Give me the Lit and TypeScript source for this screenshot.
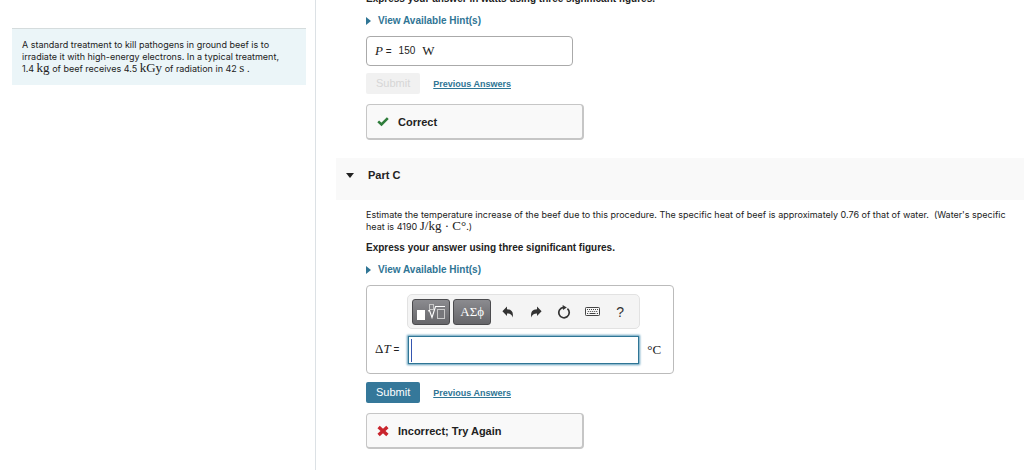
import { LitElement, html, css } from "lit";
import { customElement, property } from "lit/decorators.js";

const check = html`<svg class="mark" viewBox="0 0 12 12" aria-hidden="true">
  <path d="M1.2 5.4 L4.5 8.5 L10.8 2.2" fill="none" stroke="#2f7d3b" stroke-width="2.6" />
</svg>`;

const cross = html`<svg class="mark" viewBox="0 0 12 12" aria-hidden="true">
  <path d="M1.6 2 L10.4 10 M10.4 2 L1.6 10" fill="none" stroke="#c9252d" stroke-width="3.4" />
</svg>`;

const undo = html`<svg viewBox="0 0 12 12" aria-hidden="true">
  <path d="M5 0.5 V3.2 C9.5 3.2 11.8 6 10.6 11.5 C10 8.6 8.3 7.4 5 7.4 V10 L0.4 5.2 Z" />
</svg>`;

const redo = html`<svg viewBox="0 0 12 12" aria-hidden="true">
  <path d="M7 0.5 V3.2 C2.5 3.2 0.2 6 1.4 11.5 C2 8.6 3.7 7.4 7 7.4 V10 L11.6 5.2 Z" />
</svg>`;

const reset = html`<svg class="reset" viewBox="0 0 14 14" aria-hidden="true">
  <path d="M10.4 3.6 A5.2 5.2 0 1 1 6.4 2.4" fill="none" stroke="#333" stroke-width="1.7" />
  <path d="M5.6 0 L9.8 2.4 L6 5 Z" />
</svg>`;

const keyboard = html`<svg class="keyboard" viewBox="0 0 15 9" aria-hidden="true">
  <rect x="0.5" y="0.5" width="14" height="8" rx="0.8" fill="#f8f8f8" stroke="#444" />
  <path d="M2 2.5 H13 M2.8 4.5 H13" stroke="#444" stroke-dasharray="1 1" fill="none" />
  <path d="M2 6.5 H3.2 M4.5 6.5 H10.5 M11.8 6.5 H13" stroke="#444" fill="none" />
</svg>`;

const template = html`<svg class="template" viewBox="0 0 30 18" aria-hidden="true">
  <rect x="1" y="7" width="8" height="10" fill="#fff" />
  <path d="M12 8 L13.5 7.5 L16 14.5 L19.5 3.5 H29" fill="none" stroke="#fff" stroke-width="1.1" />
  <rect x="13.5" y="1.5" width="4" height="5" fill="none" stroke="#c8c8c8" />
  <rect x="21.5" y="6.5" width="7" height="9" fill="#77777b" stroke="#c8c8c8" />
</svg>`;

const shared = css`
  * {
    box-sizing: border-box;
  }
  button {
    font: inherit;
    margin: 0;
    padding: 0;
    border: 0;
    background: none;
    color: inherit;
  }
  .serif {
    font-family: "Liberation Serif", "Times New Roman", serif;
    font-size: 13px;
    line-height: 0;
  }
`;

@customElement("hint-toggle")
export class HintToggle extends LitElement {
  static styles = [
    shared,
    css`
      :host {
        display: block;
      }
      .toggle {
        display: flex;
        align-items: center;
        gap: 7px;
        color: #2f7595;
        font-weight: bold;
        line-height: 12px;
      }
      .toggle::before {
        content: "";
        border: solid transparent;
        border-width: 4px 0 4px 5px;
        border-left-color: #2f7595;
      }
    `,
  ];

  render() {
    return html`<button class="toggle" type="button">View Available Hint(s)</button>`;
  }
}

@customElement("submit-row")
export class SubmitRow extends LitElement {
  @property({ type: Boolean }) disabled = false;

  static styles = [
    shared,
    css`
      :host {
        display: flex;
        align-items: center;
        gap: 13px;
      }
      .submit {
        padding: 4px 10px;
        border-radius: 2px;
        background: #35789a;
        color: #fff;
        font-size: 11px;
        line-height: 13px;
      }
      .submit:disabled {
        background: #f1f1f1;
        color: #d6d6d6;
      }
      .previous {
        color: #2f7595;
        font-size: 9px;
        font-weight: bold;
      }
    `,
  ];

  render() {
    return html`<button class="submit" type="button" ?disabled=${this.disabled}>Submit</button>
      <a class="previous" href="#previous">Previous Answers</a>`;
  }
}

@customElement("result-box")
export class ResultBox extends LitElement {
  @property({ type: Boolean }) correct = false;

  static styles = [
    shared,
    css`
      :host {
        display: flex;
        align-items: center;
        gap: 9px;
        box-sizing: border-box;
        width: 218px;
        max-width: 100%;
        padding: 11px 10px 10px;
        border: 1px solid #c6c6c6;
        border-right-width: 2px;
        border-bottom-width: 2px;
        border-radius: 4px;
        background: #f9f9f9;
        color: #222;
        font-size: 11px;
        font-weight: bold;
        line-height: 12px;
      }
      .mark {
        width: 12px;
        height: 12px;
      }
    `,
  ];

  render() {
    return html`${this.correct ? check : cross}
      <span>${this.correct ? "Correct" : "Incorrect; Try Again"}</span>`;
  }
}

@customElement("answer-editor")
export class AnswerEditor extends LitElement {
  static styles = [
    shared,
    css`
      :host {
        display: grid;
        grid-template-columns: auto 233px auto;
        align-items: center;
        gap: 6px 5px;
        box-sizing: border-box;
        width: fit-content;
        padding: 8px 12px 8px 8px;
        border: 1px solid #bbb;
        border-radius: 4px;
      }
      .toolbar {
        grid-column: 2;
        display: flex;
        align-items: center;
        height: 35px;
        padding: 0 4px;
        border: 1px solid #e2e2e2;
        border-radius: 5px;
        background: #f4f4f4;
      }
      .key {
        display: grid;
        place-items: center;
        width: 38px;
        height: 26px;
        margin-right: 3px;
        border: 1px solid #4b4b4e;
        border-radius: 3px;
        background: linear-gradient(#8b8b8f, #66666a);
        color: #fff;
      }
      .tool {
        display: grid;
        place-items: center;
        width: 28px;
        height: 26px;
        fill: #333;
        color: #333;
        font-size: 14px;
      }
      .tool svg {
        width: 12px;
        height: 12px;
      }
      .tool .reset {
        width: 14px;
        height: 14px;
      }
      .tool .keyboard {
        width: 15px;
        height: 9px;
      }
      .template {
        width: 30px;
        height: 18px;
      }
      .name {
        grid-column: 1;
        padding-right: 3px;
        color: #222;
      }
      .field {
        position: relative;
        display: flex;
        padding: 1px;
      }
      .field::after {
        content: "";
        position: absolute;
        left: 4px;
        top: 4px;
        width: 1px;
        height: 23px;
        background: #3556b0;
      }
      .entry {
        width: 100%;
        height: 28px;
        padding: 0 6px;
        border: 1px solid #2f7595;
        border-radius: 0;
        outline: 0;
        box-shadow: 0 0 2px 1px #5f9dba;
        background: #fff;
        font: inherit;
      }
      .unit {
        padding-left: 2px;
        color: #222;
      }
    `,
  ];

  render() {
    return html`<div class="toolbar" role="toolbar">
        <button class="key" type="button">${template}</button>
        <button class="key serif" type="button">ΑΣϕ</button>
        <button class="tool" type="button">${undo}</button>
        <button class="tool" type="button">${redo}</button>
        <button class="tool" type="button">${reset}</button>
        <button class="tool" type="button">${keyboard}</button>
        <button class="tool" type="button">?</button>
      </div>
      <label class="name" for="delta"><span class="serif">Δ<i>T</i></span> =</label>
      <div class="field"><input class="entry" id="delta" type="text" /></div>
      <span class="unit serif">°C</span>`;
  }
}

@customElement("app-root")
export class AppRoot extends LitElement {
  static styles = [
    shared,
    css`
      :host {
        display: grid;
        grid-template-columns: 316px minmax(0, 1fr);
        height: 100vh;
        overflow: hidden;
        background: #fff;
        color: #333;
        font-family: "Liberation Sans", Arial, sans-serif;
        font-size: 10px;
        line-height: 12px;
      }
      .sidebar {
        padding: 28px 9px 0 12px;
        border-right: 1px solid #dce1e5;
      }
      .problem {
        padding: 10px 20px 10px 10px;
        border-top: 1px solid #d5dcdd;
        background: #ebf5f8;
      }
      .problem,
      .prompt {
        color: #222;
        font-family: Inter, "Liberation Sans", sans-serif;
        font-size: 9px;
      }
      p {
        margin: 0;
      }
      .main {
        padding-left: 20px;
        overflow: hidden;
      }
      .part {
        display: flex;
        flex-direction: column;
        align-items: flex-start;
        padding-left: 30px;
      }
      .scrolled {
        margin-top: -7px;
      }
      .instruction {
        color: #222;
        font-weight: bold;
        margin-bottom: 10px;
      }
      .answer {
        display: flex;
        align-items: center;
        gap: 7px;
        width: 207px;
        height: 30px;
        margin: 9px 0 7px;
        padding: 0 8px;
        border: 1px solid #aaa;
        border-radius: 4px;
        color: #222;
      }
      .answer .serif {
        line-height: 14px;
      }
      result-box {
        margin-top: 10px;
      }
      .heading {
        display: flex;
        align-items: center;
        gap: 14px;
        height: 42px;
        margin: 18px 0 9px;
        padding: 0 10px 8px;
        background: #f9f9f9;
        color: #222;
      }
      .heading::before {
        content: "";
        border: solid transparent;
        border-width: 5px 4px 0;
        border-top-color: #222;
      }
      .title {
        margin: 0;
        font-size: 11px;
      }
      .prompt {
        margin-bottom: 9px;
      }
      .editor {
        margin: 9px 0 8px;
      }
    `,
  ];

  render() {
    return html`<aside class="sidebar">
        <p class="problem">
          A standard treatment to kill pathogens in ground beef is to irradiate it with high-energy electrons.
          In a typical treatment, 1.4 <span class="serif">kg</span> of beef receives 4.5
          <span class="serif">kGy</span> of radiation in 42 <span class="serif">s</span> .
        </p>
      </aside>
      <main class="main">
        <section class="part scrolled">
          <p class="instruction">Express your answer in watts using three significant figures.</p>
          <hint-toggle></hint-toggle>
          <div class="answer">
            <span><i class="serif">P</i> =</span><span>150</span><span class="serif">W</span>
          </div>
          <submit-row disabled></submit-row>
          <result-box correct></result-box>
        </section>
        <header class="heading"><h2 class="title">Part C</h2></header>
        <section class="part">
          <p class="prompt">
            Estimate the temperature increase of the beef due to this procedure. The specific heat of beef is
            approximately 0.76 of that of water. &nbsp;(Water's specific heat is 4190
            <span class="serif">J/kg · C°</span>.)
          </p>
          <p class="instruction">Express your answer using three significant figures.</p>
          <hint-toggle></hint-toggle>
          <answer-editor class="editor"></answer-editor>
          <submit-row></submit-row>
          <result-box></result-box>
        </section>
      </main>`;
  }
}
